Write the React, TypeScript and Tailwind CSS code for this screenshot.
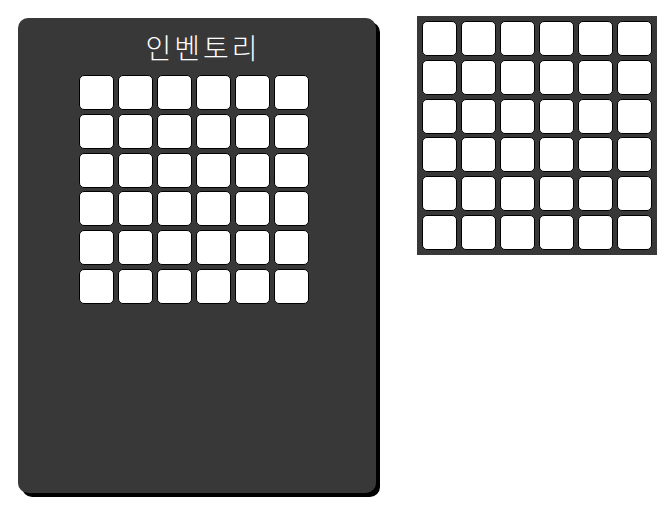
const cells = Array.from({ length: 36 }, (_, i) => i);

function Slot() {
    return <div className="w-[35px] h-[35px] bg-white border border-black rounded-[5px]" />;
}

function SlotGrid() {
    return (
        <div className="grid grid-cols-[repeat(6,35px)] gap-x-[4px] gap-y-[3.8px]">
            {cells.map((i) => (
                <Slot key={i} />
            ))}
        </div>
    );
}

export default function App() {
    return (
        <div className="flex items-start pl-[18px] pt-[16px] bg-white w-[670px] h-[510px] font-['Noto_Sans_CJK_KR','Noto_Sans',sans-serif]">
            {/* 인벤토리 창 */}
            <div className="mt-[2px] w-[358px] h-[475px] bg-[#383838] rounded-[10px] shadow-[4px_4px_0_#000] flex flex-col pt-[12px]">
                <h1 className="text-white text-[28px] font-light tracking-[3px] leading-[34px] text-center pl-[12px]">인벤토리</h1>
                <div className="mt-[11px] ml-[61px]">
                    <SlotGrid />
                </div>
            </div>

            {/* 보관함 */}
            <div className="ml-[41px] bg-[#383838] p-[5px]">
                <SlotGrid />
            </div>
        </div>
    );
}
